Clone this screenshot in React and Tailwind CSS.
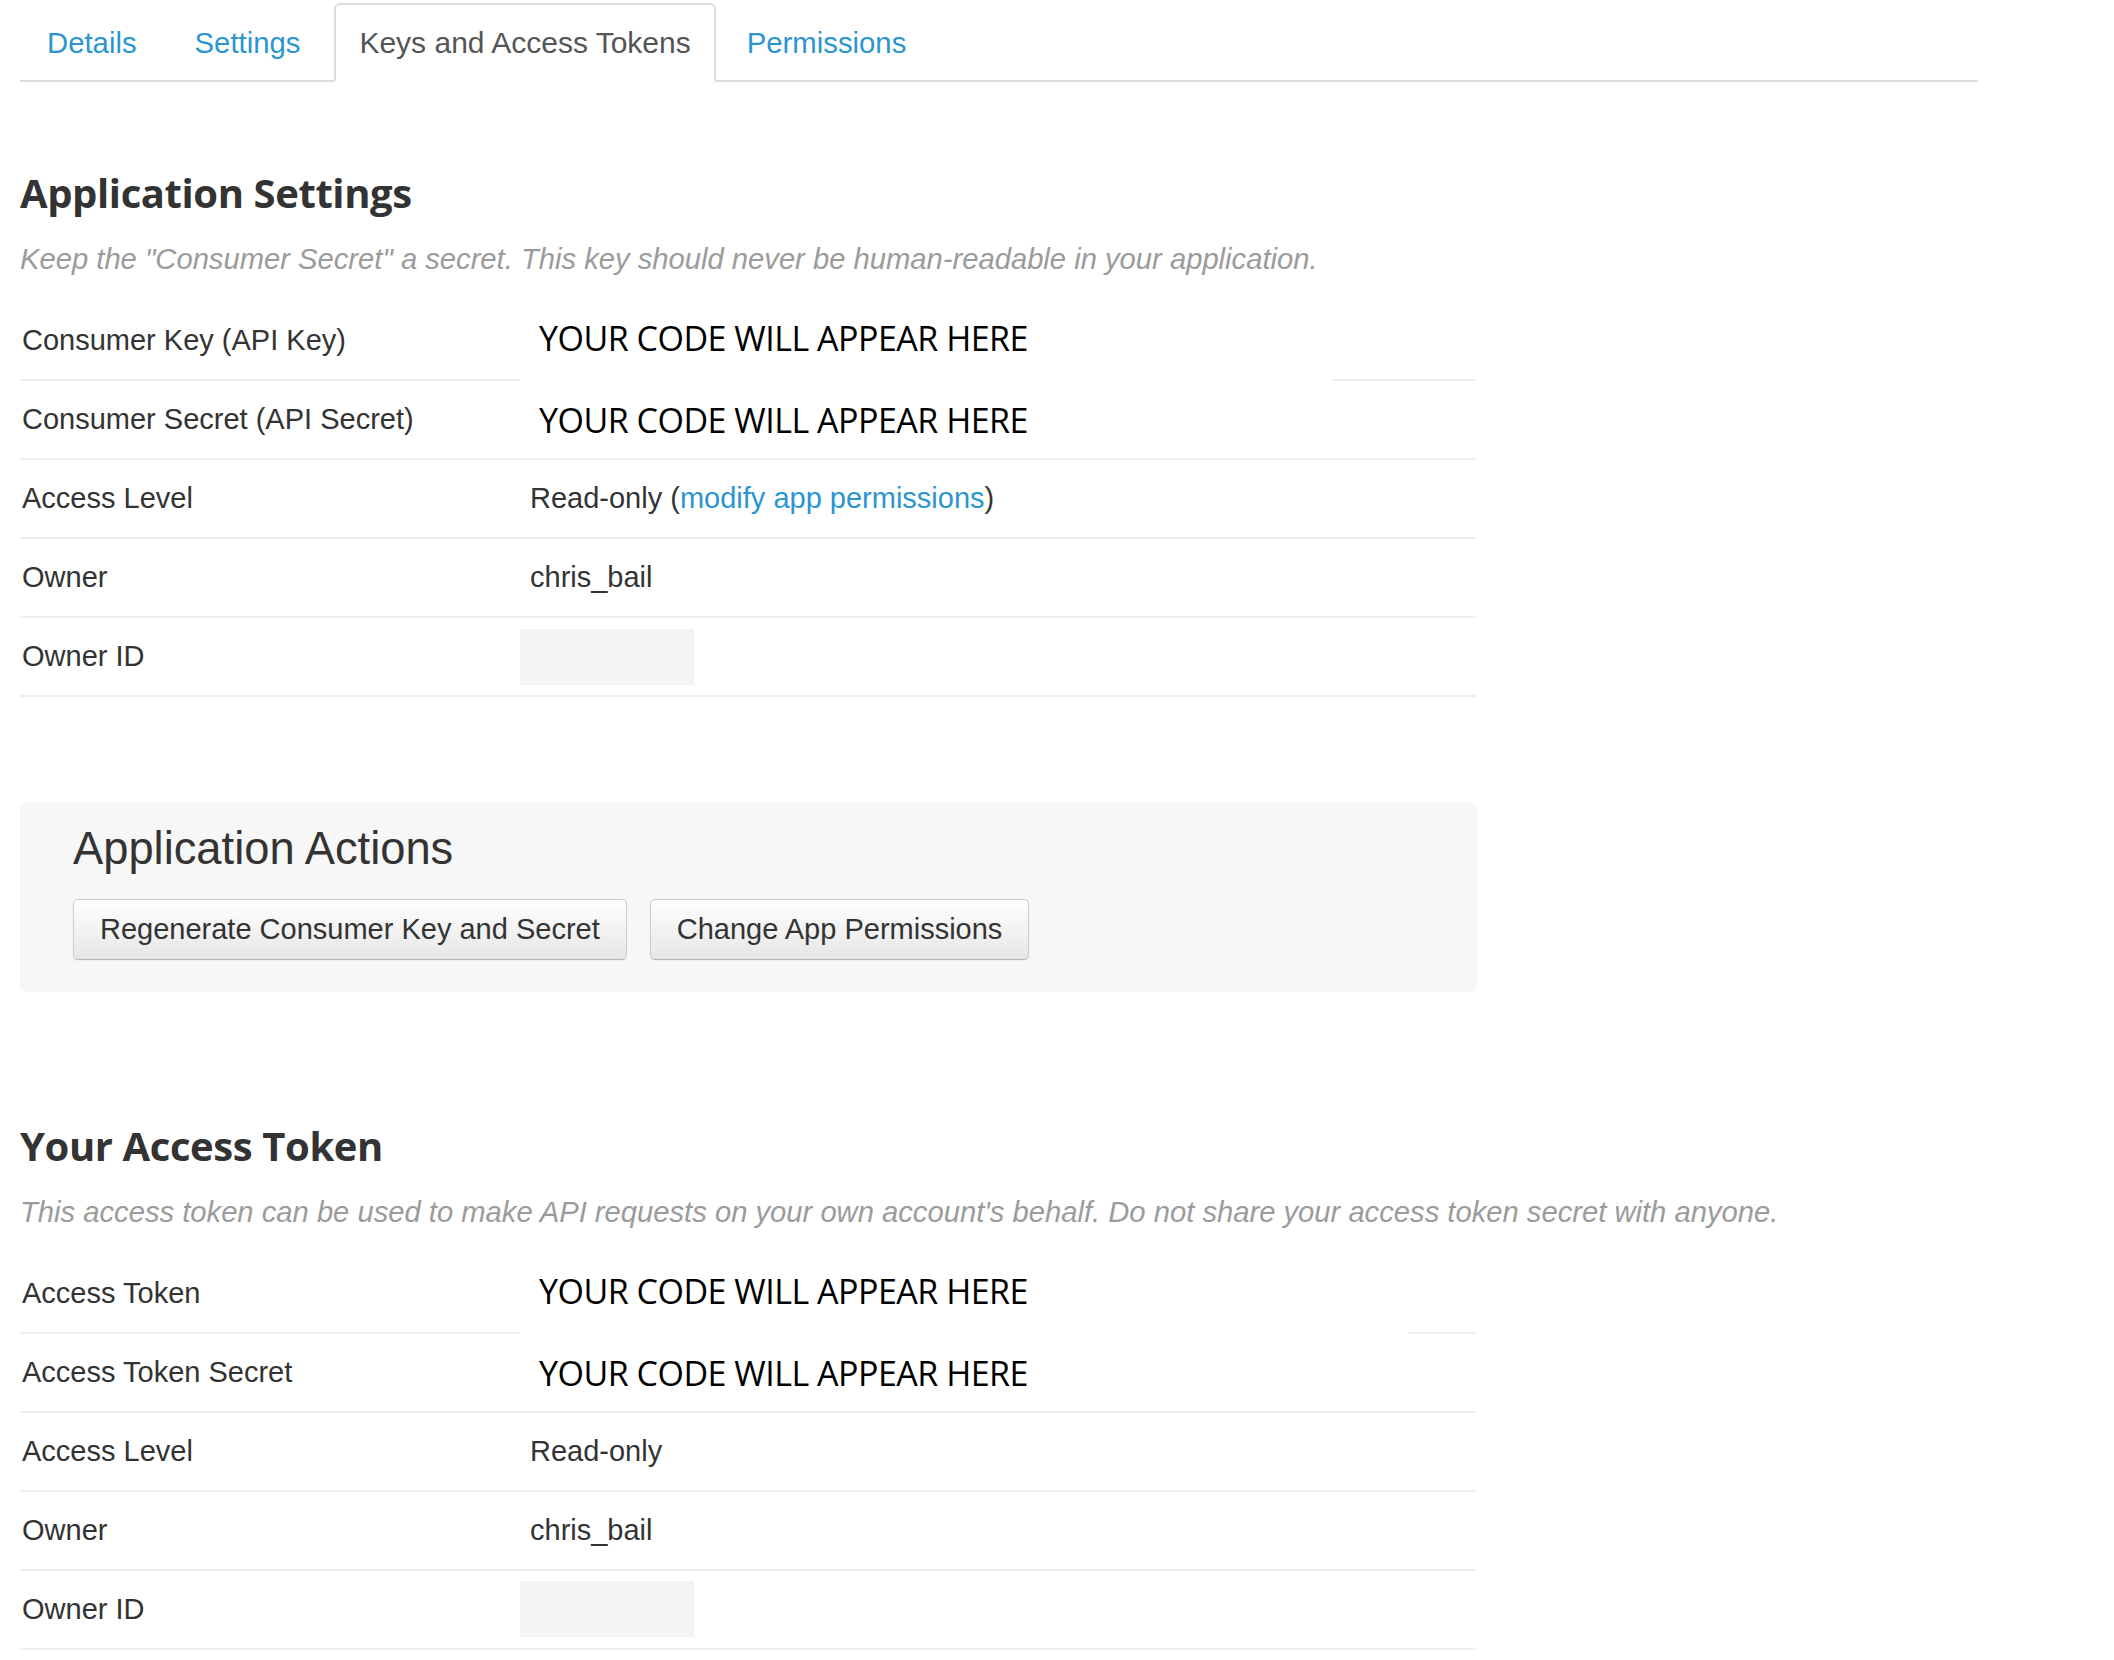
const BODY_FONT = "font-['Liberation_Sans',Arial,sans-serif]";
const HEAD_FONT = "font-['Open_Sans',sans-serif]";

const tabs = [
  { label: 'Details' },
  { label: 'Settings' },
  { label: 'Keys and Access Tokens', active: true },
  { label: 'Permissions' },
];

function Tabs() {
  return (
    <nav className="ml-[20px] flex w-[1958px] border-b-2 border-[#dddddd] pt-[3px]">
      {tabs.map((t) =>
        t.active ? (
          <span
            key={t.label}
            className="-mb-[2px] ml-[3px] mr-[4px] flex h-[79px] items-center rounded-t-[6px] border-2 border-[#dddddd] border-b-white bg-white px-[23px] text-[30px] text-[#555555]"
          >
            {t.label}
          </span>
        ) : (
          <a
            key={t.label}
            href="#"
            className="-mb-[2px] mr-[4px] flex h-[79px] items-center px-[27px] text-[29.3px] text-[#2b95d1]"
          >
            {t.label}
          </a>
        ),
      )}
    </nav>
  );
}

function Heading({ children, className = '' }) {
  return (
    <h2
      className={`${HEAD_FONT} ml-[20px] text-[40px] font-bold leading-[48px] tracking-[-0.01em] text-[#333333] ${className}`}
    >
      {children}
    </h2>
  );
}

function Note({ children }) {
  return (
    <p className="ml-[20px] mt-[24px] text-[29.2px] italic leading-[36px] text-[#9b9b9b]">
      {children}
    </p>
  );
}

function CodeText() {
  return (
    <span
      className={`${HEAD_FONT} pl-[19px] text-[34px] leading-none tracking-[-0.5px] text-black`}
    >
      YOUR CODE WILL APPEAR HERE
    </span>
  );
}

/* first row: the pasted "code" box hides part of its bottom rule */
function CodeRowTop({ label, rightRule }) {
  return (
    <div className="flex h-[79px]">
      <div className="flex w-[500px] items-center border-b-2 border-[#eeeeee] pl-[2px]">
        {label}
      </div>
      <div className="flex flex-1 items-center pb-[7px]">
        <CodeText />
      </div>
      <div className="border-b-2 border-[#eeeeee]" style={{ width: rightRule }} />
    </div>
  );
}

function Row({ label, children, plain }) {
  return (
    <div className="flex h-[79px] border-b-2 border-[#eeeeee]">
      <div className="flex w-[500px] items-center pl-[2px]">{label}</div>
      <div className={`flex flex-1 items-center ${plain ? '' : 'pl-[10px]'}`}>
        {children}
      </div>
    </div>
  );
}

function Blank({ top }) {
  return (
    <div className="self-start" style={{ marginTop: top }}>
      <div className="h-[56px] w-[174px] bg-[#f5f4f5]" />
    </div>
  );
}

function Btn({ children }) {
  return (
    <button
      type="button"
      className="h-[61px] rounded-[5px] border border-[#cccccc] border-b-[#b3b3b3] bg-gradient-to-b from-white to-[#e6e6e6] px-[26px] text-[29px] text-[#333333] shadow-[inset_0_1px_0_rgba(255,255,255,0.2),0_1px_2px_rgba(0,0,0,0.05)]"
    >
      {children}
    </button>
  );
}

export default function App() {
  return (
    <div className={`${BODY_FONT} min-h-screen w-[2114px] bg-white text-[29px] text-[#333333]`}>
      <Tabs />

      <Heading className="mt-[87px]">Application Settings</Heading>
      <Note>
        Keep the "Consumer Secret" a secret. This key should never be human-readable in your
        application.
      </Note>

      <div className="ml-[20px] mt-[25px] w-[1456px]">
        <CodeRowTop label="Consumer Key (API Key)" rightRule="143px" />
        <Row label="Consumer Secret (API Secret)" plain>
          <CodeText />
        </Row>
        <Row label="Access Level">
          Read-only (
          <a href="#" className="text-[#2b95d1]">
            modify app permissions
          </a>
          )
        </Row>
        <Row label="Owner">chris_bail</Row>
        <Row label="Owner ID" plain>
          <Blank top="11px" />
        </Row>
      </div>

      <section className="ml-[20px] mt-[105px] h-[190px] w-[1457px] rounded-[7px] bg-[#f7f7f7] px-[53px] pt-[20px]">
        <h3 className="text-[45.3px] leading-[54px] text-[#333333]">Application Actions</h3>
        <div className="mt-[23px] flex gap-[23px]">
          <Btn>Regenerate Consumer Key and Secret</Btn>
          <Btn>Change App Permissions</Btn>
        </div>
      </section>

      <Heading className="mt-[130px]">Your Access Token</Heading>
      <Note>
        This access token can be used to make API requests on your own account's behalf. Do not
        share your access token secret with anyone.
      </Note>

      <div className="ml-[20px] mt-[25px] w-[1456px]">
        <CodeRowTop label="Access Token" rightRule="67px" />
        <Row label="Access Token Secret" plain>
          <CodeText />
        </Row>
        <Row label="Access Level">Read-only</Row>
        <Row label="Owner">chris_bail</Row>
        <Row label="Owner ID" plain>
          <Blank top="10px" />
        </Row>
      </div>
    </div>
  );
}
